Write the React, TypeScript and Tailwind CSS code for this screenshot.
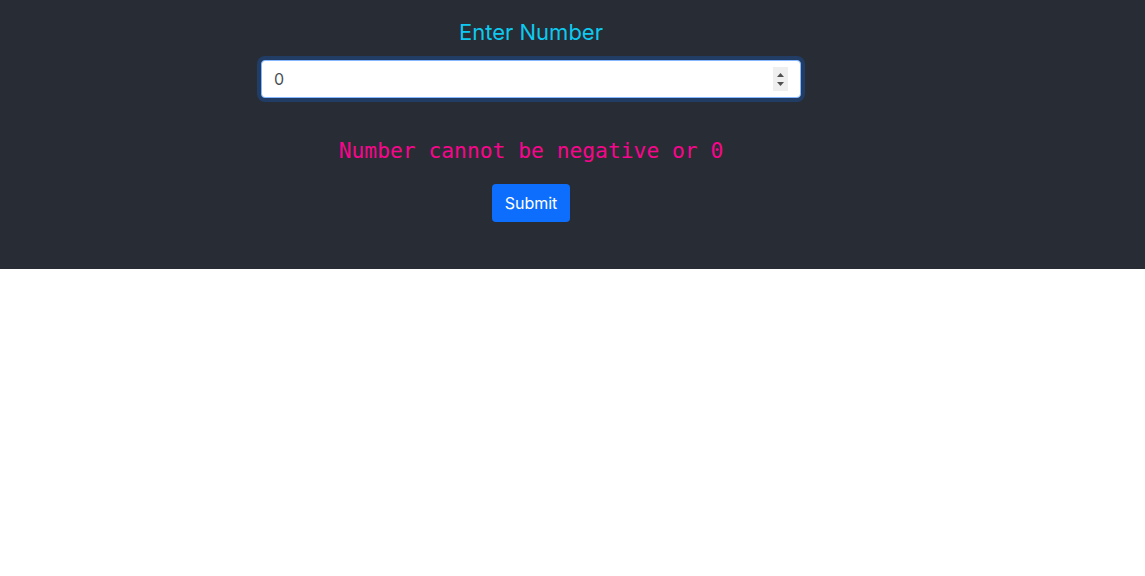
import { useState } from "react"

export default function App() {
  const [value, setValue] = useState("0")

  return (
    <div className="font-['Inter','Noto_Sans',sans-serif]">
      <header className="h-[269px] bg-[#282c34] pt-[17px]">
        <form
          className="ml-[261px] flex w-[540px] flex-col items-center"
          onSubmit={(e) => e.preventDefault()}
        >
          <label className="text-[22px] leading-[30px] text-[#0dcaf0]">Enter Number</label>
          <div className="relative mt-[13px] w-full">
            <input
              type="number"
              value={value}
              onChange={(e) => setValue(e.target.value)}
              className="h-[38px] w-full appearance-none rounded-[4px] border border-[#86b7fe] bg-white px-3 text-base text-[#495057] shadow-[0_0_0_4px_rgba(13,110,253,0.25)] outline-none [&::-webkit-inner-spin-button]:appearance-none"
            />
            {/* spinner drawn over the field */}
            <span className="pointer-events-none absolute right-[13px] top-[7px] flex h-[24px] w-[15px] flex-col items-center justify-center gap-[5px] bg-[#efefef]">
              <svg width="7" height="4" viewBox="0 0 7 4">
                <path d="M0 4L3.5 0L7 4Z" fill="#505050" />
              </svg>
              <svg width="7" height="4" viewBox="0 0 7 4">
                <path d="M0 0L3.5 4L7 0Z" fill="#505050" />
              </svg>
            </span>
          </div>
          <p className="mt-[39px] font-['DejaVu_Sans_Mono',monospace] text-[21.3px] leading-[28px] text-[#f7068c]">
            Number cannot be negative or 0
          </p>
          <button
            type="submit"
            className="mt-[19px] h-[38px] rounded-[4px] bg-[#0d6efd] px-[13px] text-base text-white"
          >
            Submit
          </button>
        </form>
      </header>
    </div>
  )
}
